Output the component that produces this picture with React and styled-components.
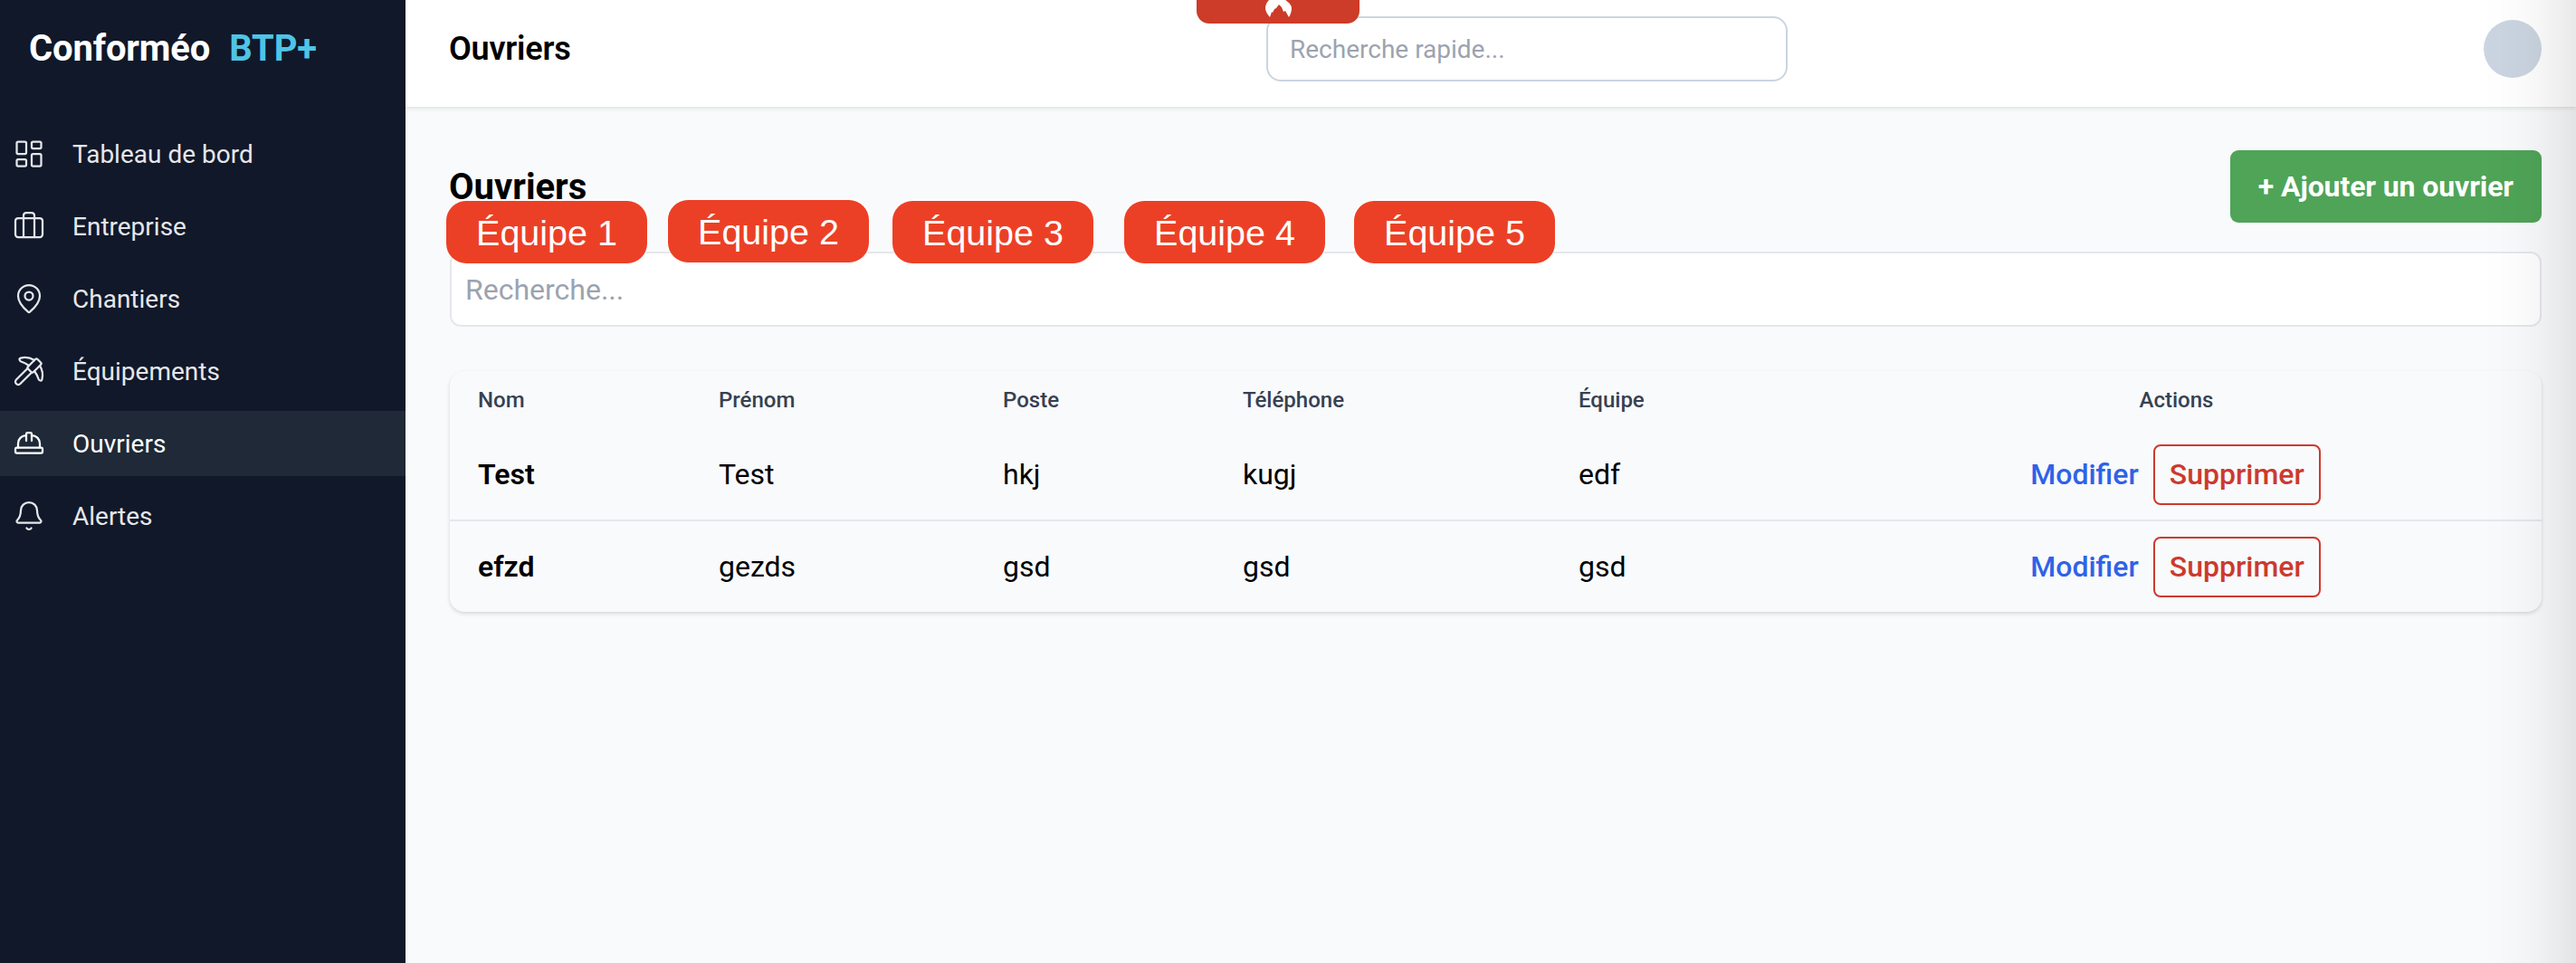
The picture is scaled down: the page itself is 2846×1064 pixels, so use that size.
import React from "react";
import styled, { createGlobalStyle } from "styled-components";
import { LayoutDashboard, Briefcase, MapPin, Pickaxe, HardHat, Bell } from "lucide-react";

const GlobalStyle = createGlobalStyle`
  html, body {
    margin: 0;
    height: 100%;
    overflow: hidden;
    font-family: Roboto, "Liberation Sans", sans-serif;
    background: #f9fafc;
  }
  * { box-sizing: border-box; }
`;

const Page = styled.div`
  position: relative;
  display: flex;
  width: 2846px;
  height: 1064px;
  overflow: hidden;
`;

// panel sitting just off the right edge, only its shadow shows
const OffscreenPanel = styled.div`
  position: absolute;
  top: -120px;
  bottom: -120px;
  left: 100%;
  width: 100px;
  background: #fff;
  box-shadow: 0 0 100px rgba(0, 0, 0, 0.18);
  z-index: 5;
`;

const Sidebar = styled.aside`
  width: 448px;
  flex-shrink: 0;
  background: #111829;
  color: #e5e7eb;
`;

const Logo = styled.div`
  height: 118px;
  padding: 31px 0 0 32px;
  font-size: 40px;
  line-height: 46px;
  font-weight: 700;
  letter-spacing: -0.15px;
  color: #fff;
  display: flex;
  gap: 21px;
`;

const LogoAccent = styled.span`
  color: #4fc4e6;
`;

const Nav = styled.nav`
  margin-top: 16px;
  display: flex;
  flex-direction: column;
  gap: 8px;
`;

const NavItem = styled.a`
  height: 72px;
  display: flex;
  align-items: center;
  gap: 30px;
  padding-left: 14px;
  font-size: 28px;
  color: ${(p) => (p.$active ? "#fff" : "#e5e7eb")};
  background: ${(p) => (p.$active ? "#1f2937" : "transparent")};
  svg {
    width: 36px;
    height: 36px;
    stroke-width: 1.5;
    flex-shrink: 0;
  }
`;

const Main = styled.div`
  flex: 1;
  min-width: 0;
  display: flex;
  flex-direction: column;
`;

const Header = styled.header`
  position: relative;
  height: 118px;
  flex-shrink: 0;
  display: grid;
  grid-template-columns: 903px 576px 1fr;
  align-items: center;
  padding: 0 38px 10px 48px;
  background: #fff;
  box-shadow: 0 2px 4px rgba(0, 0, 0, 0.1);
`;

const HeaderTitle = styled.h1`
  margin: 0;
  font-size: 36px;
  font-weight: 600;
  letter-spacing: -0.2px;
  color: #000;
`;

const QuickSearch = styled.input`
  width: 576px;
  height: 72px;
  padding: 0 24px;
  border: 2px solid #cbd5e1;
  border-radius: 16px;
  background: #fff;
  font-family: inherit;
  font-size: 28px;
  &::placeholder {
    color: #9ca3af;
  }
`;

const Avatar = styled.div`
  justify-self: end;
  width: 64px;
  height: 64px;
  border-radius: 50%;
  background: #cbd5e1;
`;

const VpnTab = styled.div`
  position: absolute;
  top: 0;
  left: 874px;
  width: 180px;
  height: 26px;
  display: flex;
  justify-content: center;
  background: #cc3c28;
  border-radius: 0 0 14px 14px;
  z-index: 3;
`;

const Content = styled.main`
  position: relative;
  flex: 1;
  padding: 48px 38px 0 49px;
`;

const TitleRow = styled.div`
  display: flex;
  justify-content: space-between;
  align-items: flex-start;
  height: 112px;
`;

const PageTitle = styled.h2`
  margin: 17px 0 0 -1px;
  font-size: 40px;
  line-height: 47px;
  font-weight: 700;
  color: #000;
`;

const AddButton = styled.button`
  height: 80px;
  padding: 0 31px;
  border: 0;
  border-radius: 9px;
  background: #4fa457;
  color: #fff;
  font-family: inherit;
  font-size: 32px;
  font-weight: 700;
  letter-spacing: -0.1px;
`;

const SearchInput = styled.input`
  display: block;
  width: 100%;
  height: 83px;
  padding: 0 15px;
  border: 2px solid #e5e7eb;
  border-radius: 12px;
  background: #fff;
  font-family: inherit;
  font-size: 32px;
  &::placeholder {
    color: #9ca3af;
  }
`;

// injected badges floating over the page
const TeamBadge = styled.div`
  position: absolute;
  left: ${(p) => p.$left}px;
  top: ${(p) => p.$top}px;
  width: 222px;
  height: 69px;
  padding-top: 2px;
  display: flex;
  align-items: center;
  justify-content: center;
  background: #ec4026;
  border-radius: 22px;
  box-shadow: 0 0 0 1px rgba(255, 255, 255, 0.6);
  color: #fff;
  font-family: "Liberation Sans", Arial, sans-serif;
  font-size: 39.5px;
  z-index: 4;
`;

const Card = styled.div`
  margin-top: 49px;
  border-radius: 16px;
  background: #f9fafc;
  box-shadow: 0 2px 4px rgba(0, 0, 0, 0.14);
  overflow: hidden;
`;

const Table = styled.table`
  width: 100%;
  table-layout: fixed;
  border-collapse: collapse;
`;

const Col = styled.col`
  width: ${(p) => p.$w}px;
`;

const Th = styled.th`
  height: 64px;
  padding: 0 0 0 ${(p) => (p.$center ? 0 : 31)}px;
  font-size: 24px;
  font-weight: 500;
  color: #374151;
  text-align: ${(p) => (p.$center ? "center" : "left")};
`;

const Row = styled.tr`
  height: 101px;
  & + & {
    border-top: 2px solid #e5e7eb;
  }
`;

const Td = styled.td`
  padding: 0 0 0 ${(p) => (p.$center ? 0 : 31)}px;
  font-size: 32px;
  font-weight: ${(p) => (p.$strong ? 600 : 400)};
  color: #000;
`;

const Actions = styled.div`
  display: flex;
  justify-content: center;
  align-items: center;
  gap: 16px;
  padding-right: 2px;
`;

const EditLink = styled.a`
  font-size: 32px;
  font-weight: 500;
  color: #2f62e8;
`;

const DeleteButton = styled.button`
  height: 67px;
  padding: 0 16px;
  border: 2px solid #cc3a2e;
  border-radius: 8px;
  background: transparent;
  color: #cc3a2e;
  font-family: inherit;
  font-size: 32px;
  font-weight: 500;
`;

const navItems = [
  { label: "Tableau de bord", Icon: LayoutDashboard },
  { label: "Entreprise", Icon: Briefcase },
  { label: "Chantiers", Icon: MapPin },
  { label: "Équipements", Icon: Pickaxe },
  { label: "Ouvriers", Icon: HardHat, active: true },
  { label: "Alertes", Icon: Bell },
];

const workers = [
  { nom: "Test", prenom: "Test", poste: "hkj", tel: "kugj", equipe: "edf" },
  { nom: "efzd", prenom: "gezds", poste: "gsd", tel: "gsd", equipe: "gsd" },
];

// offsets inside the content area
const badges = [
  { label: "Équipe 1", left: 45, top: 104 },
  { label: "Équipe 2", left: 290, top: 103 },
  { label: "Équipe 3", left: 538, top: 104 },
  { label: "Équipe 4", left: 794, top: 104 },
  { label: "Équipe 5", left: 1048, top: 104 },
];

const colWidths = [266, 314, 265, 371, 288, 807];

const App = () => (
  <Page>
    <GlobalStyle />
    <Sidebar>
      <Logo>
        <span>Conforméo</span>
        <LogoAccent>BTP+</LogoAccent>
      </Logo>
      <Nav>
        {navItems.map(({ label, Icon, active }) => (
          <NavItem key={label} $active={active}>
            <Icon />
            {label}
          </NavItem>
        ))}
      </Nav>
    </Sidebar>
    <Main>
      <Header>
        <HeaderTitle>Ouvriers</HeaderTitle>
        <QuickSearch placeholder="Recherche rapide..." />
        <Avatar />
        <VpnTab>
          <svg width="30" height="20" viewBox="0 0 30 20">
            <path
              d="M6 19 C3 16 1 12 1 9 C1 5 3 2 5 0 H23 C26 2 30 5 30 9 C30 12 29 16 27 19 L23 12 L21 13 L19 8 L16 5 L13 9 L11 10 L9 14 L8 13 Z"
              fill="#fff"
            />
          </svg>
        </VpnTab>
      </Header>
      <Content>
        <TitleRow>
          <PageTitle>Ouvriers</PageTitle>
          <AddButton>+ Ajouter un ouvrier</AddButton>
        </TitleRow>
        <SearchInput placeholder="Recherche..." />
        {badges.map((b) => (
          <TeamBadge key={b.label} $left={b.left} $top={b.top}>
            {b.label}
          </TeamBadge>
        ))}
        <Card>
          <Table>
            <colgroup>
              {colWidths.map((w, i) => (
                <Col key={i} $w={w} />
              ))}
            </colgroup>
            <thead>
              <tr>
                <Th>Nom</Th>
                <Th>Prénom</Th>
                <Th>Poste</Th>
                <Th>Téléphone</Th>
                <Th>Équipe</Th>
                <Th $center>Actions</Th>
              </tr>
            </thead>
            <tbody>
              {workers.map((w) => (
                <Row key={w.nom}>
                  <Td $strong>{w.nom}</Td>
                  <Td>{w.prenom}</Td>
                  <Td>{w.poste}</Td>
                  <Td>{w.tel}</Td>
                  <Td>{w.equipe}</Td>
                  <Td $center>
                    <Actions>
                      <EditLink>Modifier</EditLink>
                      <DeleteButton>Supprimer</DeleteButton>
                    </Actions>
                  </Td>
                </Row>
              ))}
            </tbody>
          </Table>
        </Card>
      </Content>
    </Main>
    <OffscreenPanel />
  </Page>
);

export default App;
